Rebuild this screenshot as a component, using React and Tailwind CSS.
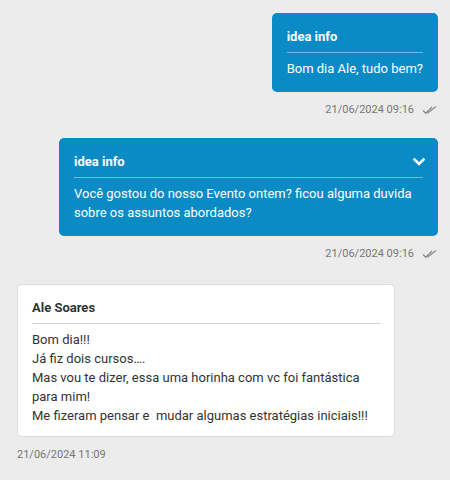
function DoubleCheck() {
    return (
        <svg width="15" height="10" viewBox="0 0 15 10" fill="none" stroke="#8a8a8a" strokeWidth="1.25">
            <path d="M1 5.5 L3.8 8.3 L10 2" />
            <path d="M5.5 8.3 L14 1.5" />
        </svg>
    );
}

function Chevron() {
    return (
        <svg width="14" height="10" viewBox="0 0 14 10" fill="none" stroke="#ffffff" strokeWidth="2.6" strokeLinecap="square">
            <path d="M2.5 2.5 L7 7 L11.5 2.5" />
        </svg>
    );
}

function SentMessage({ title, children, time, collapsible }) {
    return (
        <div className="flex flex-col items-end">
            <div className="max-w-[379px] bg-[#0a8bc6] rounded-[5px] pt-[15px] pb-[14px] px-[15px] text-white">
                <div className="flex items-center justify-between border-b border-[#6fbbe0] pb-[6px]">
                    <span className="text-[13px] font-bold leading-[18px]">{title}</span>
                    {collapsible && (
                        <span className="-mr-[3px]">
                            <Chevron />
                        </span>
                    )}
                </div>
                <p className="mt-[6px] text-[13px] leading-[19px]">{children}</p>
            </div>
            <div className="flex items-center gap-[8px] mt-[10px] mr-[1px] text-[11px] leading-[16px] text-[#777777]">
                <span>{time}</span>
                <DoubleCheck />
            </div>
        </div>
    );
}

function ReceivedMessage({ name, lines, time }) {
    return (
        <div className="flex flex-col items-start">
            <div className="w-[378px] bg-white border border-[#dddddd] rounded-[5px] pt-[14px] pb-[11px] px-[14px] text-[#333333]">
                <div className="border-b border-[#cfcfcf] pb-[6px] text-[13px] font-bold leading-[18px]">
                    {name}
                </div>
                <div className="mt-[6px] text-[13px] leading-[19px] whitespace-pre-wrap">
                    {lines.map((line, i) => (
                        <p key={i}>{line}</p>
                    ))}
                </div>
            </div>
            <div className="mt-[10px] text-[11px] leading-[16px] text-[#777777]">{time}</div>
        </div>
    );
}

export default function App() {
    return (
        <div
            className="w-[450px] h-[480px] bg-[#ececec] pt-[13px] pl-[17px] pr-[12px] flex flex-col gap-[20px] overflow-hidden"
            style={{ fontFamily: "Roboto, 'Liberation Sans', sans-serif" }}
        >
            <SentMessage title="idea info" time="21/06/2024 09:16">
                Bom dia Ale, tudo bem?
            </SentMessage>
            <SentMessage title="idea info" time="21/06/2024 09:16" collapsible>
                Você gostou do nosso Evento ontem? ficou alguma duvida sobre os assuntos abordados?
            </SentMessage>
            <div className="mt-[2px]">
                <ReceivedMessage
                    name="Ale Soares"
                    time="21/06/2024 11:09"
                    lines={[
                        "Bom dia!!!",
                        "Já fiz dois cursos….",
                        "Mas vou te dizer, essa uma horinha com vc foi fantástica para mim!",
                        "Me fizeram pensar e  mudar algumas estratégias iniciais!!!",
                    ]}
                />
            </div>
        </div>
    );
}
